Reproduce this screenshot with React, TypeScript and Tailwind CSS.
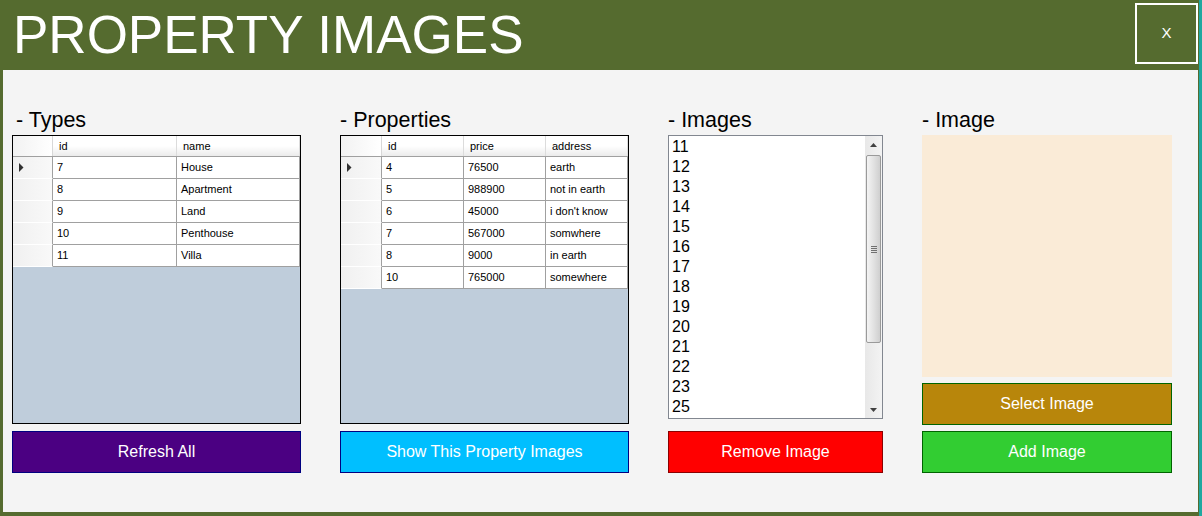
import React from 'react';

type GridProps = {
  columns: { label: string; width: string }[];
  rows: string[][];
  rowHeaderWidth: string;
};

const DataGrid = ({ columns, rows, rowHeaderWidth }: GridProps) => {
  return (
    <div className="h-[289px] w-[289px] border border-black bg-[#bfcddb] flex flex-col">
      {/* header */}
      <div className="flex h-[21px] border-b border-[#a0a0a0] bg-gradient-to-b from-white via-white to-[#ebebeb]">
        <div className={`${rowHeaderWidth} h-full border-r border-[#d8d8d8] bg-gradient-to-r from-[#f2f2f2] to-white`} />
        {columns.map((c) => (
          <div
            key={c.label}
            className={`${c.width} h-full border-r border-[#dcdcdc] pl-[6px] text-[11px] leading-[20px] text-black`}
          >
            {c.label}
          </div>
        ))}
      </div>
      {/* rows */}
      {rows.map((row, i) => (
        <div key={i} className="flex h-[22px] bg-white">
          <div
            className={`${rowHeaderWidth} h-full border-r border-[#a0a0a0] border-b border-b-white bg-gradient-to-r from-[#f0f0f0] to-[#f9f9f9] pl-[6px] flex items-center`}
          >
            {i === 0 && (
              <svg width="5" height="9" viewBox="0 0 5 9">
                <polygon points="0,0 4.5,4.5 0,9" fill="#303030" />
              </svg>
            )}
          </div>
          {row.map((cell, j) => (
            <div
              key={j}
              className={`${columns[j].width} h-full border-r border-b border-[#a0a0a0] pl-[4px] text-[11px] leading-[21px] text-black whitespace-nowrap overflow-hidden`}
            >
              {cell}
            </div>
          ))}
        </div>
      ))}
    </div>
  );
};

const Btn = ({ label, className }: { label: string; className: string }) => (
  <div className={`h-[42px] flex items-center justify-center text-[16px] text-white border ${className}`}>
    {label}
  </div>
);

const Label = ({ text, className = '' }: { text: string; className?: string }) => (
  <div className={`h-[24px] text-[21.5px] leading-[24px] text-black ${className}`}>{text}</div>
);

export default function App() {
  const images = ['11', '12', '13', '14', '15', '16', '17', '18', '19', '20', '21', '22', '23', '25'];

  return (
    <div
      className="w-[1202px] h-[516px] flex overflow-hidden"
      style={{ fontFamily: '"Liberation Sans", Arial, sans-serif' }}
    >
      <div className="w-[1199px] h-full flex flex-col bg-[#556b2f]">
        {/* title bar */}
        <div className="h-[70px] flex justify-between items-start">
          <h1 className="pl-[13px] pt-[8px] text-[53px] leading-[53px] text-white">PROPERTY IMAGES</h1>
          <div className="mt-[3px] mr-[1px] w-[63px] h-[61px] border-2 border-white flex items-center justify-center text-white text-[15px]">
            X
          </div>
        </div>

        {/* body */}
        <div className="flex-1 ml-[3px] mr-[1px] mb-[4px] bg-[#f4f4f4] pl-[9px] pt-[38px] flex gap-[39px]">
          {/* Types */}
          <div className="w-[289px] flex flex-col">
            <Label text="- Types" className="pl-[4px]" />
            <div className="mt-[3px]">
              <DataGrid
                rowHeaderWidth="w-[40px]"
                columns={[
                  { label: 'id', width: 'w-[124px]' },
                  { label: 'name', width: 'w-[123px]' },
                ]}
                rows={[
                  ['7', 'House'],
                  ['8', 'Apartment'],
                  ['9', 'Land'],
                  ['10', 'Penthouse'],
                  ['11', 'Villa'],
                ]}
              />
            </div>
            <div className="mt-[7px]">
              <Btn label="Refresh All" className="bg-[#4b0082] border-[#000080]" />
            </div>
          </div>

          {/* Properties */}
          <div className="w-[289px] flex flex-col">
            <Label text="- Properties" />
            <div className="mt-[3px]">
              <DataGrid
                rowHeaderWidth="w-[41px]"
                columns={[
                  { label: 'id', width: 'w-[82px]' },
                  { label: 'price', width: 'w-[82px]' },
                  { label: 'address', width: 'w-[82px]' },
                ]}
                rows={[
                  ['4', '76500', 'earth'],
                  ['5', '988900', 'not in earth'],
                  ['6', '45000', "i don't know"],
                  ['7', '567000', 'somwhere'],
                  ['8', '9000', 'in earth'],
                  ['10', '765000', 'somewhere'],
                ]}
              />
            </div>
            <div className="mt-[7px]">
              <Btn label="Show This Property Images" className="bg-[#00bfff] border-[#000080]" />
            </div>
          </div>

          {/* Images */}
          <div className="w-[215px] flex flex-col">
            <Label text="- Images" />
            <div className="mt-[3px] h-[284px] border border-[#828790] bg-white flex">
              <div className="flex-1 pl-[3px] pt-[1px] overflow-hidden">
                {images.map((n) => (
                  <div key={n} className="text-[16px] leading-[20px] text-black">
                    {n}
                  </div>
                ))}
              </div>
              {/* scrollbar */}
              <div className="w-[17px] h-full bg-gradient-to-r from-[#e8e8e8] to-[#f3f3f3] flex flex-col items-center">
                <div className="h-[17px] w-full flex items-center justify-center">
                  <svg width="7" height="4" viewBox="0 0 7 4">
                    <polygon points="0,4 3.5,0 7,4" fill="#404040" />
                  </svg>
                </div>
                <div className="mt-[2px] h-[188px] w-[15px] rounded-[2px] border border-[#9a9a9a] bg-gradient-to-r from-[#f4f4f4] via-[#e2e2e2] to-[#cfcfcf] flex flex-col items-center justify-center gap-[1px]">
                  <div className="w-[6px] h-[1px] bg-[#707070]" />
                  <div className="w-[6px] h-[1px] bg-[#707070]" />
                  <div className="w-[6px] h-[1px] bg-[#707070]" />
                  <div className="w-[6px] h-[1px] bg-[#707070]" />
                </div>
                <div className="flex-1" />
                <div className="h-[17px] w-full flex items-center justify-center">
                  <svg width="7" height="4" viewBox="0 0 7 4">
                    <polygon points="0,0 3.5,4 7,0" fill="#404040" />
                  </svg>
                </div>
              </div>
            </div>
            <div className="mt-[12px]">
              <Btn label="Remove Image" className="bg-[#ff0000] border-[#8b0000]" />
            </div>
          </div>

          {/* Image */}
          <div className="w-[250px] flex flex-col">
            <Label text="- Image" />
            <div className="mt-[3px] h-[242px] bg-[#faebd7]" />
            <div className="mt-[6px]">
              <Btn label="Select Image" className="bg-[#b8860b] border-[#006400]" />
            </div>
            <div className="mt-[6px]">
              <Btn label="Add Image" className="bg-[#32cd32] border-[#006400]" />
            </div>
          </div>
        </div>
      </div>
      <div className="w-[3px] h-full bg-[#1fa8a0]" />
    </div>
  );
}
